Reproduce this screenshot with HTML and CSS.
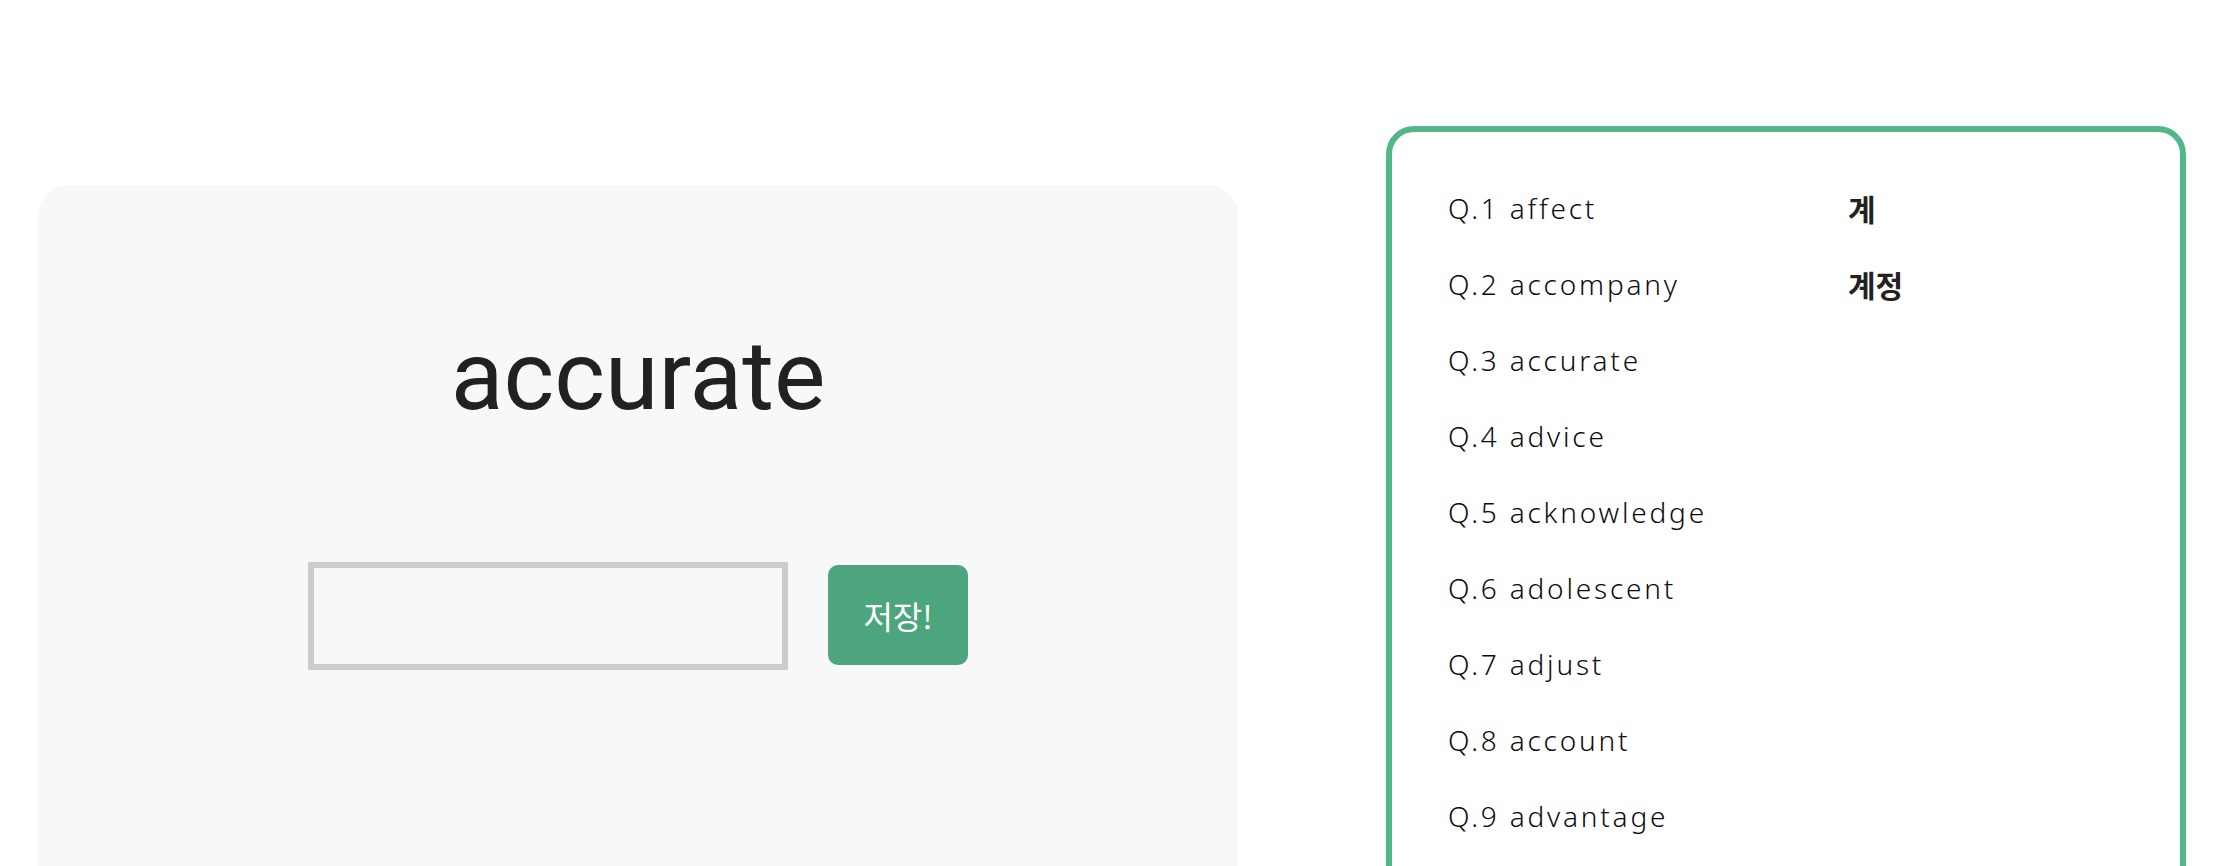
FILE: index.html
```html
<!DOCTYPE html>
<html lang="ko">
<head>
<meta charset="utf-8">
<title>Quiz</title>
<link rel="stylesheet" href="styles.css">
</head>
<body>
<main class="page">
  <section class="card">
    <h1 class="word">accurate</h1>
    <form class="answer-row">
      <input class="answer-input" type="text">
      <button class="save-btn" type="button">저장!</button>
    </form>
  </section>
  <aside class="list-box">
    <ul class="q-list">
      <li class="q-item"><span class="q-word">Q.1 affect</span><span class="q-answer">계</span></li>
      <li class="q-item"><span class="q-word">Q.2 accompany</span><span class="q-answer">계정</span></li>
      <li class="q-item"><span class="q-word">Q.3 accurate</span><span class="q-answer"></span></li>
      <li class="q-item"><span class="q-word">Q.4 advice</span><span class="q-answer"></span></li>
      <li class="q-item"><span class="q-word">Q.5 acknowledge</span><span class="q-answer"></span></li>
      <li class="q-item"><span class="q-word">Q.6 adolescent</span><span class="q-answer"></span></li>
      <li class="q-item"><span class="q-word">Q.7 adjust</span><span class="q-answer"></span></li>
      <li class="q-item"><span class="q-word">Q.8 account</span><span class="q-answer"></span></li>
      <li class="q-item"><span class="q-word">Q.9 advantage</span><span class="q-answer"></span></li>
    </ul>
  </aside>
</main>
</body>
</html>
```

FILE: styles.css
```css
html, body {
  margin: 0;
  padding: 0;
  background: #ffffff;
  height: 100%;
  overflow: hidden;
}

.page {
  display: flex;
  align-items: flex-start;
  padding-left: 38px;
  gap: 148px;
  font-family: "Noto Sans CJK KR", "Noto Sans", sans-serif;
  color: #222222;
}

.card {
  box-sizing: border-box;
  width: 1200px;
  height: 760px;
  margin-top: 185px;
  padding-top: 143px;
  background: #f8f8f8;
  border-radius: 30px;
  display: flex;
  flex-direction: column;
  align-items: center;
}

.word {
  margin: 0;
  font-family: Roboto, "Liberation Sans", sans-serif;
  font-weight: 400;
  font-size: 97px;
  line-height: 96px;
  color: #212121;
}

.answer-row {
  margin: 138px 0 0;
  display: flex;
  align-items: center;
  gap: 40px;
}

.answer-input {
  box-sizing: border-box;
  width: 480px;
  height: 108px;
  margin: 0;
  border: 6px solid #cccccc;
  background: transparent;
  outline: none;
  font-size: 30px;
}

.save-btn {
  box-sizing: border-box;
  width: 140px;
  height: 100px;
  border: none;
  border-radius: 10px;
  background: #4ca57d;
  color: #ffffff;
  font-family: "Noto Sans CJK KR", "Noto Sans", sans-serif;
  font-size: 32px;
  font-weight: 400;
  padding: 0;
  margin-top: -2px;
}

.list-box {
  box-sizing: border-box;
  width: 800px;
  height: 900px;
  margin-top: 126px;
  border: 6px solid #52b788;
  border-radius: 28px;
  padding: 38px 0 0 56px;
}

.q-list {
  list-style: none;
  margin: 0;
  padding: 0;
}

.q-item {
  display: grid;
  grid-template-columns: 400px 1fr;
  height: 76px;
  line-height: 76px;
  font-size: 28px;
}

.q-word {
  font-family: "Noto Sans", "Noto Sans CJK KR", sans-serif;
  font-weight: 300;
  letter-spacing: 2.8px;
  color: #0d0d0d;
}

.q-answer {
  font-family: "Noto Sans CJK KR", sans-serif;
  font-size: 30px;
  font-weight: 700;
  color: #222222;
}
```
